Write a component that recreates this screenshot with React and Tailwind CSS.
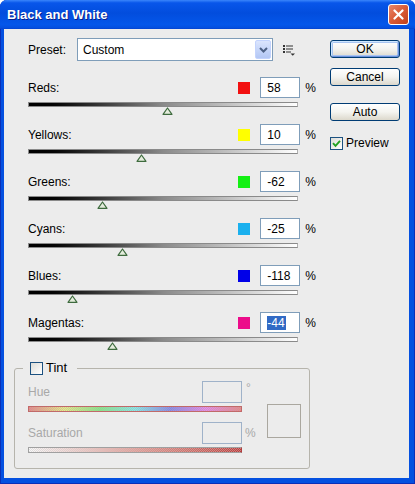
import React from "react";

const rows = [
  { label: "Reds:", color: "bg-[#f21010]", value: 58 },
  { label: "Yellows:", color: "bg-[#ffff00]", value: 10 },
  { label: "Greens:", color: "bg-[#14f014]", value: -62 },
  { label: "Cyans:", color: "bg-[#1ab0ee]", value: -25 },
  { label: "Blues:", color: "bg-[#0000e8]", value: -118 },
  { label: "Magentas:", color: "bg-[#ec0c8a]", value: -44, selected: true },
];

function Thumb() {
  return (
    <svg width="11" height="8" viewBox="0 0 11 8">
      <path d="M5.5 1 L10 7.3 L1 7.3 Z" fill="#e4ecdc" stroke="#3e6b3e" strokeWidth="1.2" strokeLinejoin="round" />
    </svg>
  );
}

function Check({ checked }) {
  return (
    <div className="w-[13px] h-[13px] border border-[#1c5180] bg-linear-to-br from-[#dcdcd7] to-white flex items-center justify-center">
      {checked && (
        <svg width="9" height="9" viewBox="0 0 9 9">
          <path d="M1 4.2 L3.5 6.8 L8 1.8" fill="none" stroke="#21a121" strokeWidth="1.9" />
        </svg>
      )}
    </div>
  );
}

function SliderRow({ label, color, value, selected }) {
  const pos = ((value + 200) / 500) * 269;
  return (
    <div className="h-[47px] flex flex-col">
      <div className="flex items-center h-[21px] w-[288px]">
        <span className="flex-1">{label}</span>
        <span className={`w-[12px] h-[12px] ${color}`} />
        <div className="ml-[10px] w-[40px] h-[21px] bg-white border border-[#7f9db9] flex items-center pl-[6px]">
          {selected ? (
            <span className="bg-[#316ac5] text-white leading-[14px] pr-[1px]">{value}</span>
          ) : (
            value
          )}
        </div>
        <span className="ml-[5px]">%</span>
      </div>
      <div className="mt-[4px] w-[270px] h-[5px] border border-[#8a8a8a] border-r-[#b0b0b0] bg-linear-to-r from-black via-[#8a8a8a] to-white" />
      <div className="relative h-[8px] w-[270px]">
        <div className="absolute top-0 leading-none" style={{ left: Math.round(pos) - 5 }}>
          <Thumb />
        </div>
      </div>
    </div>
  );
}

function XpButton({ children, def }) {
  return (
    <div
      className={`w-[70px] h-[18px] rounded-[3px] border border-[#003c74] bg-linear-to-b from-white via-[#f4f4f0] to-[#dcd8cc] flex items-center justify-center text-black ${
        def ? "shadow-[inset_1px_1px_0_#cee7ff,inset_-1px_-1px_0_#6c92de,inset_0_0_0_2px_#a8c4f0]" : ""
      }`}
    >
      {children}
    </div>
  );
}

function MenuIcon() {
  return (
    <svg width="12" height="11" viewBox="0 0 12 11">
      <g fill="#333">
        <rect x="0" y="0" width="2" height="2" />
        <rect x="3" y="0.5" width="7" height="1" />
        <rect x="0" y="3" width="2" height="2" />
        <rect x="3" y="3.5" width="7" height="1" />
        <rect x="0" y="6" width="2" height="2" />
        <rect x="3" y="6.5" width="5" height="1" />
        <path d="M7.5 8.5 H12 L9.75 10.8 Z" />
      </g>
    </svg>
  );
}

export default function App() {
  return (
    <div className="w-[415px] h-[484px] flex flex-col bg-[#0450e0] rounded-t-[7px] overflow-hidden shadow-[inset_1px_0_0_#0a2fb8,inset_-1px_0_0_#0a2fb8,inset_0_-1px_0_#0a2fb8] font-['Liberation_Sans',Arial,sans-serif] text-[12px] text-black">
      {/* Title bar */}
      <div className="h-[29px] shrink-0 flex items-center justify-between pl-[7px] pr-[6px] bg-[linear-gradient(to_bottom,#3a86fb_0%,#0856ea_10%,#024ddd_45%,#0457ea_85%,#0450e0_95%,#0343d0_100%)]">
        <span className="text-white font-bold text-[13px] [text-shadow:1px_1px_0_#0a1f8a]">Black and White</span>
        <div className="w-[21px] h-[21px] rounded-[3px] border border-white bg-linear-to-br from-[#e8866a] via-[#d95a36] to-[#c0401c] flex items-center justify-center">
          <svg width="11" height="11" viewBox="0 0 11 11">
            <path d="M1.5 1.5 L9.5 9.5 M9.5 1.5 L1.5 9.5" stroke="white" strokeWidth="2.2" strokeLinecap="round" />
          </svg>
        </div>
      </div>

      {/* Body */}
      <div className="flex-1 ml-[4px] mr-[6px] mb-[6px] bg-[#ececec] flex pt-[9px] pl-[10px]">
        {/* Left column */}
        <div className="w-[300px] flex flex-col">
          <div className="pl-[14px] h-[23px] flex items-center">
            <span className="w-[49px]">Preset:</span>
            <div className="w-[196px] h-[23px] bg-white border border-[#7f9db9] flex items-center justify-between pl-[5px]">
              <span>Custom</span>
              <div className="mr-[1px] w-[16px] h-[19px] rounded-[2px] border border-[#c3d3fd] bg-linear-to-b from-[#dbe5fd] to-[#b3c7f5] flex items-center justify-center">
                <svg width="9" height="6" viewBox="0 0 9 6">
                  <path d="M1 1 L4.5 4.5 L8 1" fill="none" stroke="#4d6185" strokeWidth="2" />
                </svg>
              </div>
            </div>
            <div className="ml-[10px] mt-[1px]">
              <MenuIcon />
            </div>
          </div>

          <div className="pl-[14px] mt-[16px] flex flex-col">
            {rows.map((r) => (
              <SliderRow key={r.label} {...r} />
            ))}
          </div>

          <div className="relative mt-[9px] w-[296px] border border-[#b6b4ac] rounded-[3px]">
            <div className="absolute top-[-8px] left-[8px] h-[14px] bg-[#ececec] pl-[7px] pr-[10px] flex items-center gap-[3px]">
              <Check />
              <span className="text-[13px]">Tint</span>
            </div>
            <div className="pt-[12px] pl-[13px] pb-[15px] flex items-start text-[#a8a8a8]">
              <div className="w-[228px] flex flex-col">
                <div className="flex items-center h-[22px]">
                  <span className="flex-1">Hue</span>
                  <div className="w-[40px] h-[22px] border border-[#9fb2c9]" />
                  <span className="w-[14px] pl-[4px] self-start leading-[12px] mt-[1px]">°</span>
                </div>
                <div className="relative mt-[3px] w-[214px] h-[6px] border border-[#c06a6a] bg-[linear-gradient(to_right,#f08080,#f0f080,#80f080,#80f0f0,#8080f0,#f080f0,#f08080)]">
                  <div className="absolute inset-0 bg-[repeating-conic-gradient(#b0b0b0_0%_25%,transparent_0%_50%)] bg-[length:2px_2px] opacity-60" />
                </div>
                <div className="flex items-center h-[22px] mt-[10px]">
                  <span className="flex-1">Saturation</span>
                  <div className="w-[40px] h-[22px] border border-[#9fb2c9]" />
                  <span className="w-[14px] pl-[3px]">%</span>
                </div>
                <div className="relative mt-[3px] w-[214px] h-[6px] border border-[#a0a0a0] border-r-[#b04040] bg-linear-to-r from-[#f8f8f8] to-[#c03838]">
                  <div className="absolute inset-0 bg-[repeating-conic-gradient(#c8c8c8_0%_25%,transparent_0%_50%)] bg-[length:2px_2px] opacity-50" />
                </div>
              </div>
              <div className="ml-[11px] mt-[23px] w-[34px] h-[34px] border border-[#aaa79f]" />
            </div>
          </div>
        </div>

        {/* Right column */}
        <div className="ml-[16px] pt-[2px] flex flex-col">
          <XpButton def>OK</XpButton>
          <div className="mt-[10px]">
            <XpButton>Cancel</XpButton>
          </div>
          <div className="mt-[17px]">
            <XpButton>Auto</XpButton>
          </div>
          <div className="mt-[13px] flex items-center gap-[3px]">
            <Check checked />
            <span>Preview</span>
          </div>
        </div>
      </div>
    </div>
  );
}
